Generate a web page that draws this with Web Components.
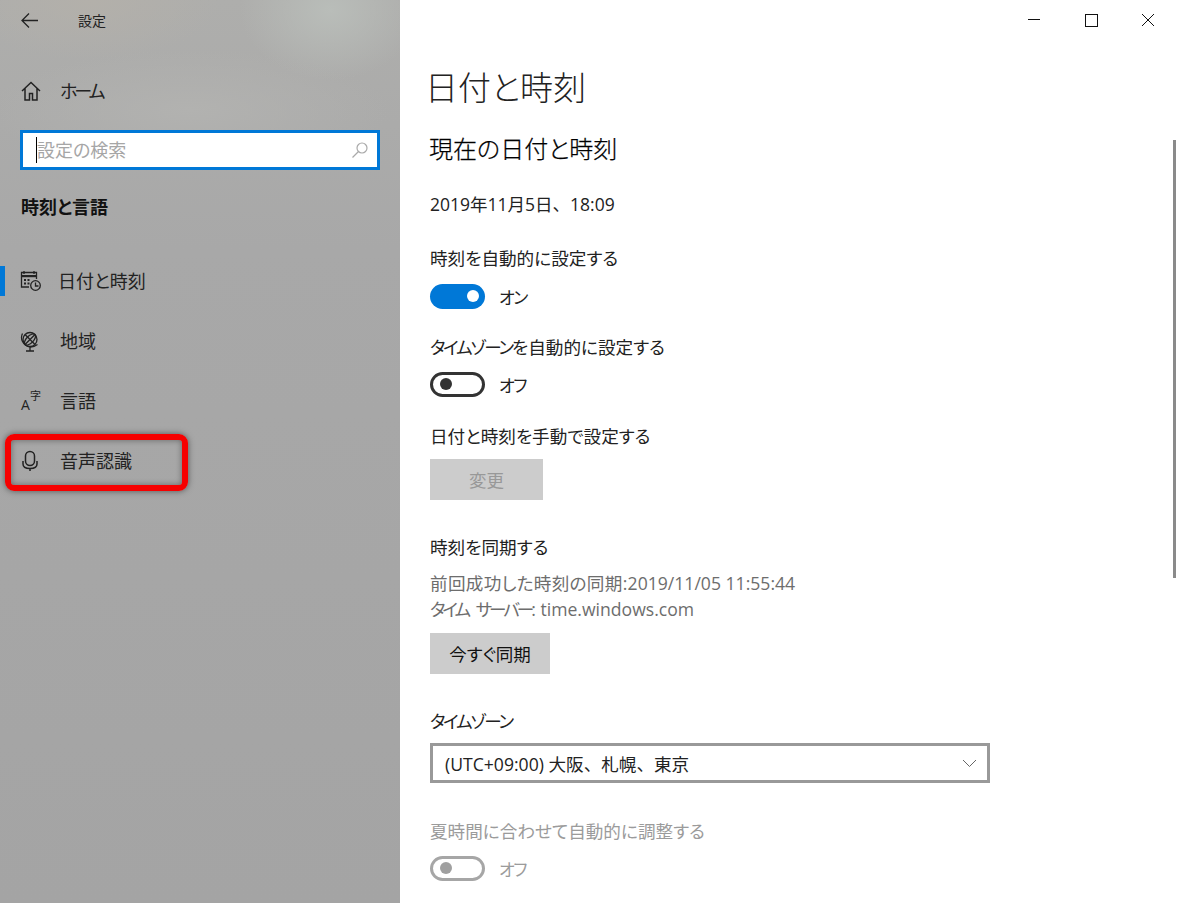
<!DOCTYPE html>
<html lang="ja"><head><meta charset="utf-8"><style>
html,body{margin:0;height:100%;overflow:hidden}
body{font-family:"Open Sans","Noto Sans CJK JP",sans-serif;color:#111}
</style></head><body>
<settings-app>
  <settings-sidebar slot="side">
    <nav-item icon="home" slot="home"><span style="letter-spacing:-3px">ホーム</span></nav-item>
    <nav-item icon="date" active>日付と時刻</nav-item>
    <nav-item icon="globe">地域</nav-item>
    <nav-item icon="lang">言語</nav-item>
    <nav-item icon="mic" marked>音声認識</nav-item>
  </settings-sidebar>
  <settings-main slot="main"></settings-main>
</settings-app>
<script>
const F='"Open Sans","Noto Sans CJK JP",sans-serif';
const icons={
home:'<path d="M2 11 11 2.500l9 8.500M5 8.500V20h4.500v-6.500h3V20H17V8.500" fill="none" stroke="#222" stroke-width="1.500"/>',
date:'<g fill="none" stroke="#222" stroke-width="1.300"><path d="M9 17H1.500V2.500h15V9"/><path d="M4 1v3M14 1v3" /><circle cx="15.500" cy="15.500" r="4.800"/><path d="M15.500 12.500v3.500h3"/></g><path d="M2 5h14v2.200H2z" fill="#222"/><path d="M4 9h2v2H4zM7.500 9h2v2h-2zM4 12.500h2v2H4zM7.500 12.500h2v2h-2z" fill="#222"/>',
globe:'<g fill="none" stroke="#222" stroke-width="1.300"><circle cx="10" cy="9.500" r="7"/><path d="M5 4.500 15 14.500M15 4.500 5 14.500"/><ellipse cx="10" cy="9.500" rx="3.500" ry="7" transform="rotate(45 10 9.500)"/><path d="M2.500 3.500c-2.500 5 0 12 7.500 13.500 3 .2 5.500-1 7.500-2.500M10 17v3.500M6 21h8"/></g>',
lang:'',
mic:'<g fill="none" stroke="#222" stroke-width="1.500"><rect x="5.500" y="1.500" width="9" height="14" rx="4.500"/><path d="M3 11v3c0 3 3 4.500 7 4.500s7-1.500 7-4.500v-3M10 18.500V21"/></g>'
};
function comp(name,html,init){customElements.define(name,class extends HTMLElement{
  constructor(){super();this.attachShadow({mode:'open'}).innerHTML=typeof html==='function'?html(this):html}
  connectedCallback(){init&&init(this)}
})}

comp('settings-app',`<style>
:host{display:flex;width:1177px;height:903px;overflow:hidden;background:#fff}
</style><slot name="side"></slot><slot name="main"></slot>`);

comp('settings-sidebar',`<style>
:host{display:block;box-sizing:border-box;width:400px;height:903px;flex:none;
 background:
  radial-gradient(ellipse 90px 70px at 330px 10px,#b9bdb9 0,rgba(185,189,185,0) 100%),
  radial-gradient(ellipse 130px 60px at 90px 0,#b3b0aa 0,rgba(179,176,170,0) 100%),
  radial-gradient(ellipse 200px 60px at 190px 110px,#b2b2b0 0,rgba(178,178,176,0) 100%),
  linear-gradient(#aeaeac 0,#a8a8a8 250px,#a4a4a4 100%);
 font-family:${F};color:#111;font-feature-settings:"palt"}
.top{display:flex;align-items:center;height:41px}
.back{width:19px;margin-left:20px;display:flex}
.title{margin-left:39px;font-size:14px;line-height:41px;color:#222}
.search{box-sizing:border-box;margin:19px 20px 0;width:360px;height:40px;border:3px solid #0078d7;background:#fff;display:flex;align-items:center;padding:0 8px 0 13px}
.caret{width:1px;height:26px;background:#000;flex:none}
.ph{font-size:18px;color:#a6a6a6;flex:1;line-height:26px}
h2{margin:22px 0 0 21px;font-size:18px;font-weight:700;line-height:30px;color:#111}
.items{margin-top:29px;display:flex;flex-direction:column}
</style>
<div class="top"><span class="back"><svg width="19" height="17" viewBox="0 0 19 17"><path d="M9 1.500 2 8.500l7 7M2 8.500h16" fill="none" stroke="#222" stroke-width="1.300"/></svg></span><span class="title">設定</span></div>
<div style="margin-top:30px"><slot name="home"></slot></div>
<div class="search"><span class="caret"></span><span class="ph">設定の検索</span>
<svg width="18" height="18" viewBox="0 0 18 18"><circle cx="11" cy="7" r="5" fill="none" stroke="#aaa" stroke-width="1.200"/><path d="M7.500 10.500 1.500 16.500" stroke="#aaa" stroke-width="1.200"/></svg></div>
<h2>時刻と言語</h2>
<div class="items"><slot></slot></div>`);

comp('nav-item',h=>{
 const k=h.getAttribute('icon');
 const ic=k==='lang'
  ?`<span class="lg"><span class="a">A</span><span class="z">字</span></span>`
  :`<svg width="22" height="22" viewBox="0 0 22 22">${icons[k]}</svg>`;
 return `<style>
:host{display:flex;align-items:center;position:relative;height:60px;font-family:${F};color:#222;font-size:18px}
:host([slot=home]){height:40px}
.i{width:22px;height:22px;margin-left:20px;flex:none;display:block;position:relative}
svg{display:block}
.t{margin-left:18px;line-height:24px}
:host([active]) .t{margin-left:16px}
:host([active]) .bar{position:absolute;left:0;top:15px;width:5px;height:30px;background:#0078d7}
.lg{position:absolute;left:0;top:0;width:22px;height:22px}
.a{position:absolute;left:1px;top:7px;font-size:14px;line-height:16px;color:#222}
.z{position:absolute;left:10px;top:-1px;font-size:11px;line-height:14px;color:#222}
:host([marked]) .mark{position:absolute;left:5px;top:3px;width:183px;height:57px;box-sizing:border-box;border:6px solid #f60000;border-radius:9px;box-shadow:0 0 6px rgba(0,0,0,.5),inset 0 0 6px rgba(0,0,0,.4)}
</style><span class="bar"></span><span class="i">${ic}</span><span class="t"><slot></slot></span><span class="mark"></span>`});

comp('toggle-row',h=>{
 const on=h.hasAttribute('on'),dis=h.hasAttribute('disabled');
 return `<style>
:host{display:flex;align-items:center;height:26px;font-family:${F};font-size:17px;letter-spacing:-1.500px;font-feature-settings:"palt";color:${dis?'#9b9b9b':'#222'}}
.sw{box-sizing:border-box;width:55px;height:25px;border-radius:13px;flex:none;position:relative;display:flex;align-items:center;
 ${on?'background:#0078d7;justify-content:flex-end;padding-right:6px':`border:3px solid ${dis?'#a6a6a6':'#333'};padding-left:7px`}}
.k{width:12px;height:12px;border-radius:50%;background:${on?'#fff':dis?'#a0a0a0':'#333'}}
.l{margin-left:14px}
</style><span class="sw"><span class="k"></span></span><span class="l"><slot></slot></span>`});

comp('flat-button',h=>`<style>
:host{display:flex;align-items:center;justify-content:center;height:41px;background:#ccc;font-family:${F};font-size:17.500px;font-feature-settings:"palt";white-space:nowrap;color:${h.hasAttribute('disabled')?'#989898':'#111'};box-sizing:border-box}
</style><slot></slot>`);

comp('settings-main',`<style>
:host{display:block;position:relative;flex:1;height:903px;background:#fff;font-family:${F};color:#111;overflow:hidden;font-feature-settings:"palt"}
.win{display:flex;height:40px;justify-content:flex-end;padding-right:22px;gap:42px;align-items:center}
.win svg{display:block}
.body{padding-left:30px}
h1{margin:20px 0 0 -5px;font-size:33px;font-weight:300;line-height:56px;color:#222}
h3{margin:16px 0 0 -1px;font-size:24px;font-weight:300;line-height:34px;color:#000;-webkit-text-stroke:.25px #000}
.date{margin-top:25px;font-size:17.500px;line-height:26px;color:#222;font-feature-settings:normal}
.lb{font-size:17.600px;line-height:26px;color:#222;margin:0}
.k{letter-spacing:-2.200px}
.sc{position:absolute;right:1px;top:140px;width:3px;height:438px;background:#8a8a8a}
.mut{font-size:17.600px;line-height:26px;color:#6d6d6d}
.dd{box-sizing:border-box;width:560px;height:40px;border:3px solid #999;display:flex;align-items:center;justify-content:space-between;padding:0 10px 0 12px;font-size:17.600px;color:#222;margin-top:9px;font-feature-settings:normal}
.dis{color:#9b9b9b}
</style>
<div class="win">
<svg width="16" height="16" viewBox="0 0 16 16"><path d="M1 7.500h12" stroke="#111"/></svg>
<svg width="14" height="14" viewBox="0 0 14 14"><rect x=".5" y="1.500" width="12" height="12" fill="none" stroke="#111"/></svg>
<svg width="14" height="14" viewBox="0 0 14 14"><path d="M1 1l12 12M13 1 1 13" stroke="#111" fill="none"/></svg>
</div>
<div class="sc"></div>
<div class="body">
<h1>日付と時刻</h1>
<h3>現在の日付と時刻</h3>
<div class="date">2019年11月5日、18:09</div>
<p class="lb" style="margin-top:28px">時刻を自動的に設定する</p>
<toggle-row on style="margin-top:12px">オン</toggle-row>
<p class="lb" style="margin-top:25px"><span class="k">タイムゾーン</span>を自動的に設定する</p>
<toggle-row style="margin-top:11px">オフ</toggle-row>
<p class="lb" style="margin-top:26px">日付と時刻を手動で設定する</p>
<flat-button disabled style="margin-top:10px;width:113px">変更</flat-button>
<p class="lb" style="margin-top:34px">時刻を同期する</p>
<div class="mut" style="margin-top:10px"><span style="letter-spacing:.3px">前回成功した時刻の同期:</span>2019/11/05 11:55:44<br><span style="letter-spacing:-3px;word-spacing:6px">タイム サーバー</span>: time.windows.com</div>
<flat-button style="margin-top:11px;width:120px">今すぐ同期</flat-button>
<p class="lb k" style="margin-top:34px">タイムゾーン</p>
<div class="dd"><span>(UTC+09:00) 大阪、札幌、東京</span><svg width="15" height="9" viewBox="0 0 15 9"><path d="M1 1l6.500 6.500L14 1" fill="none" stroke="#666" stroke-width="1"/></svg></div>
<p class="lb dis" style="margin-top:35px">夏時間に合わせて自動的に調整する</p>
<toggle-row disabled style="margin-top:11px">オフ</toggle-row>
</div>`);
</script>
</body></html>
